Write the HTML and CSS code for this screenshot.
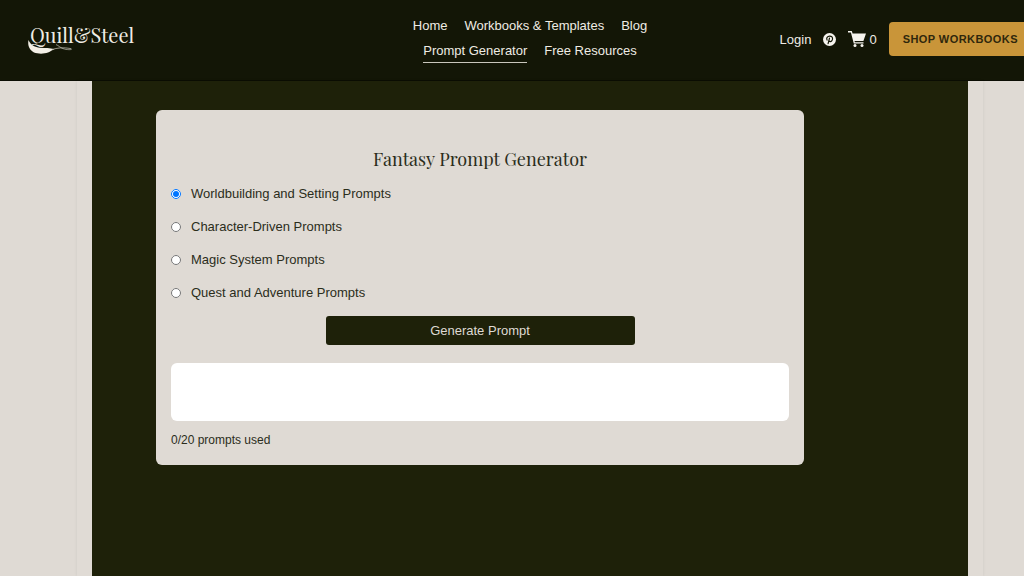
FILE: index.html
```
<!DOCTYPE html>
<html lang="en">
<head>
    <meta charset="UTF-8" />
    <meta name="viewport" content="width=device-width, initial-scale=1.0" />
    <title>Fantasy Prompt Generator - Quill&amp;Steel</title>
    <link rel="stylesheet" href="styles.css">
</head>
<body>
    <header class="site-header">
        <a class="logo" href="#">
            Quill&amp;Steel
            <svg class="logo-feather" viewBox="0 0 46 16" aria-hidden="true">
                <path d="M0.500 1C-0.500 6 1 11 6 13.500C10 15 16 15 20 13.500C22.500 12.500 24 11 26.500 10.200C22 9 17 9 12 8.800C7 8.200 3 6.500 0.500 1Z" fill="#f3efe6" />
                <path d="M24 10.500C29 9 35 8 43 9.600C45 10.800 40 11.200 35 9.600C32 8.500 30.500 6.500 28 5.600" fill="none" stroke="#b5b2a6" stroke-width="0.800" />
            </svg>
        </a>

        <nav class="site-nav">
            <a href="#">Home</a>
            <a href="#">Workbooks &amp; Templates</a>
            <a href="#">Blog</a>
            <a href="#" class="active">Prompt Generator</a>
            <a href="#">Free Resources</a>
        </nav>

        <div class="header-actions">
            <a href="#">Login</a>
            <a href="#" class="social" aria-label="Pinterest">
                <svg viewBox="0 0 24 24" width="13" height="13">
                    <circle cx="12" cy="12" r="12" fill="#f6f4ee" />
                    <path d="M9.400 19.500L12 9.500M7.500 13C5.600 9.500 8 5.600 12.400 5.600C16 5.600 18 8 17.600 11C17.200 14.400 15 16.200 13 15.800C11.800 15.600 11.200 14.800 11 14" fill="none" stroke="#131606" stroke-width="2.200" stroke-linecap="round" />
                </svg>
            </a>
            <a href="#" class="cart" aria-label="Cart, 0 items">
                <svg viewBox="0 0 18 16" width="18" height="16">
                    <path d="M0 0H3.800L4.600 2.500H18L15.400 10H6.500L6.900 11.300H15.500V12.500H5.800L2.900 1.400H0Z" fill="#f6f4ee" />
                    <circle cx="7" cy="14.400" r="1.500" fill="#f6f4ee" />
                    <circle cx="14" cy="14.400" r="1.500" fill="#f6f4ee" />
                </svg>
                <span>0</span>
            </a>
            <a href="#" class="shop-button">SHOP WORKBOOKS</a>
        </div>
    </header>

    <main class="page-frame">
        <section class="panel">
            <form class="generator" id="promptForm">
                <h2>Fantasy Prompt Generator</h2>

                <div class="options">
                    <label for="worldbuilding">
                        <input type="radio" id="worldbuilding" name="category" value="worldbuilding" checked />
                        Worldbuilding and Setting Prompts
                    </label>
                    <label for="character">
                        <input type="radio" id="character" name="category" value="character" />
                        Character-Driven Prompts
                    </label>
                    <label for="magic">
                        <input type="radio" id="magic" name="category" value="magic" />
                        Magic System Prompts
                    </label>
                    <label for="quest">
                        <input type="radio" id="quest" name="category" value="quest" />
                        Quest and Adventure Prompts
                    </label>
                </div>

                <button type="button" class="generate">Generate Prompt</button>
                <output class="prompt-output" for="worldbuilding character magic quest"></output>
                <p class="counter">0/20 prompts used</p>
            </form>
        </section>
    </main>
</body>
</html>
```
FILE: styles.css
```
/* General Reset */
* {
    box-sizing: border-box;
    margin: 0;
    padding: 0;
}
html {
    overflow-x: hidden;
}
body {
    display: flex;
    flex-direction: column;
    min-width: 1060px;
    min-height: 100vh;
    font-family: "Liberation Sans", Arial, sans-serif;
    background: #dfdad4;
    color: #2b2d1b;
}
a {
    color: inherit;
    text-decoration: none;
}

/* Header */
.site-header {
    display: grid;
    grid-template-columns: 1fr 250px 1fr;
    align-items: center;
    padding: 15px 28px 17px;
    background: #131606;
    border-bottom: 1px solid #0b0d03;
    color: #efece4;
    font-size: 13px;
}
.logo {
    position: relative;
    justify-self: start;
    font-family: "Playfair Display", "Liberation Serif", serif;
    font-size: 20px;
    line-height: 28px;
    padding: 0 0 8px 2px;
}
.logo-feather {
    position: absolute;
    left: 0;
    bottom: 2px;
    width: 46px;
    height: 16px;
}
.site-nav {
    display: flex;
    flex-wrap: wrap;
    justify-content: center;
    gap: 2px 17px;
}
.site-nav a {
    line-height: 22px;
    border-bottom: 1px solid transparent;
    white-space: nowrap;
}
.site-nav a.active {
    border-bottom-color: #c9c6bc;
}
.header-actions {
    display: flex;
    justify-self: end;
    align-items: center;
    gap: 12px;
}
.social {
    display: flex;
}
.cart {
    display: flex;
    align-items: center;
    gap: 3px;
}
.shop-button {
    padding: 0 14px;
    background: #c99539;
    border-radius: 4px;
    color: #2f270c;
    font-size: 11px;
    font-weight: 700;
    letter-spacing: 0.04em;
    line-height: 34px;
    white-space: nowrap;
}

/* Page body */
.page-frame {
    display: flex;
    flex: 1;
    margin: 0 77px;
    padding: 0 15px;
    background: #e0dbd5;
    box-shadow: 0 0 3px rgba(0, 0, 0, 0.08);
}
.panel {
    flex: 1;
    padding: 29px 64px;
    background: #1e2109;
}
.generator {
    max-width: 648px;
    padding: 14px 15px 16px;
    background: #dfdad4;
    border-radius: 6px;
}
.generator h2 {
    margin: 22px 0 12px;
    font-family: "Playfair Display", "Liberation Serif", serif;
    font-size: 18px;
    font-weight: 400;
    line-height: 26px;
    text-align: center;
}
.options {
    display: grid;
    gap: 13px;
    font-size: 13px;
}
.options label {
    display: flex;
    align-items: center;
    gap: 10px;
    line-height: 20px;
}
.options input {
    width: 10px;
    height: 10px;
}
.generate {
    display: block;
    width: 50%;
    margin: 13px auto 18px;
    border: none;
    border-radius: 3px;
    background: #1e2109;
    color: #dfdad4;
    font-family: inherit;
    font-size: 13px;
    line-height: 29px;
    cursor: pointer;
}
.prompt-output {
    display: block;
    min-height: 58px;
    padding: 14px;
    background: #fff;
    border-radius: 6px;
}
.counter {
    margin-top: 10px;
    font-size: 12px;
    line-height: 18px;
}
```
